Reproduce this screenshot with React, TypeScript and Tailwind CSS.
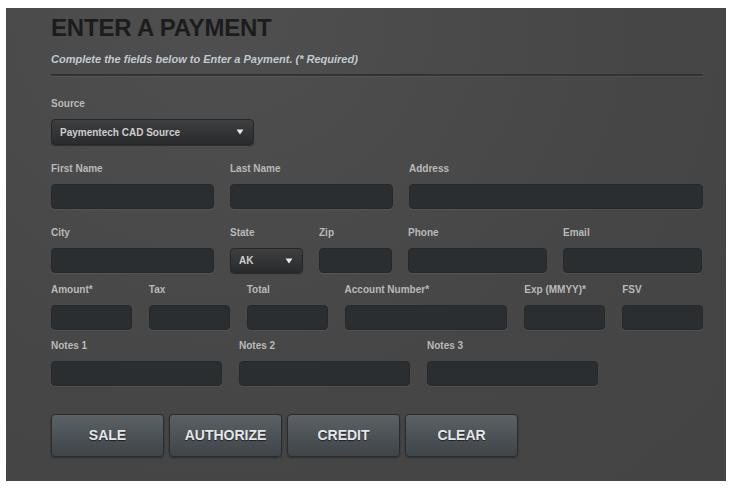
import React from "react";

const Field = ({ label, w, children }: { label: string; w: string; children?: React.ReactNode }) => (
    <div className={`flex flex-col ${w}`}>
        <label className="text-[10px] leading-[14px] font-bold text-[#b9b9b9] mb-[8px]">{label}</label>
        {children ?? (
            <input className="h-[25px] w-full rounded-[4px] bg-[#2b2e31] border border-[#26282a] shadow-[0_1px_0_rgba(255,255,255,0.06)] outline-none" />
        )}
    </div>
);

const Select = ({ value, w }: { value: string; w: string }) => (
    <div
        className={`${w} flex items-center justify-between rounded-[4px] border border-[#262729] bg-gradient-to-b from-[#3e3f41] to-[#2a2b2d] shadow-[0_1px_1px_rgba(0,0,0,0.4)] px-[8px]`}
    >
        <span className="text-[10px] font-bold text-[#cdcdcd]">{value}</span>
        <svg width="8" height="6" viewBox="0 0 8 6" className="mr-[1px]">
            <path d="M0.5 0.5 H7.5 L4 5.5 Z" fill="#e8e8e8" />
        </svg>
    </div>
);

const Btn = ({ text }: { text: string }) => (
    <button className="w-[113px] h-[43px] rounded-[4px] border border-[#2a2d2f] bg-gradient-to-b from-[#5b6266] to-[#3e4448] text-[14px] font-bold text-[#e4e6e8] [text-shadow:0_1px_1px_rgba(0,0,0,0.6)] shadow-[0_1px_2px_rgba(0,0,0,0.35)]">
        {text}
    </button>
);

export default function App() {
    return (
        <div className="w-[737px] h-[493px] bg-white pt-[8px] pl-[6px]" style={{ fontFamily: '"Liberation Sans", Arial, sans-serif' }}>
            <div className="w-[720px] h-[473px] bg-[#474747] bg-[radial-gradient(ellipse_at_30%_0%,#4f4f4f,#464646_60%,#444444)] pl-[45px] pr-[23px]">
                <h1 className="pt-[6px] text-[24px] leading-[28px] font-bold text-[#1c1c1c] tracking-[-0.2px]">ENTER A PAYMENT</h1>
                <p className="mt-[10px] text-[11px] leading-[14px] italic font-bold text-[#c3c9cf]">
                    Complete the fields below to Enter a Payment. (* Required)
                </p>
                <div className="mt-[8px] h-[2px] w-[652px] bg-[#333333] shadow-[0_1px_0_rgba(255,255,255,0.05)]" />

                <div className="mt-[21px]">
                    <Field label="Source" w="w-[203px]">
                        <Select value="Paymentech CAD Source" w="w-[203px] h-[26px]" />
                    </Field>
                </div>

                <div className="mt-[17px] flex gap-[16px]">
                    <Field label="First Name" w="w-[163px]" />
                    <Field label="Last Name" w="w-[163px]" />
                    <Field label="Address" w="w-[294px]" />
                </div>

                <div className="mt-[17px] flex gap-[16px]">
                    <Field label="City" w="w-[163px]" />
                    <Field label="State" w="w-[73px]">
                        <Select value="AK" w="w-[73px] h-[25px]" />
                    </Field>
                    <Field label="Zip" w="w-[73px]" />
                    <Field label="Phone" w="w-[139px]" />
                    <Field label="Email" w="w-[139px]" />
                </div>

                <div className="mt-[10px] flex gap-[17px]">
                    <Field label="Amount*" w="w-[81px]" />
                    <Field label="Tax" w="w-[81px]" />
                    <Field label="Total" w="w-[81px]" />
                    <Field label="Account Number*" w="w-[163px]" />
                    <Field label="Exp (MMYY)*" w="w-[81px]" />
                    <Field label="FSV" w="w-[81px]" />
                </div>

                <div className="mt-[9px] flex gap-[17px]">
                    <Field label="Notes 1" w="w-[171px]" />
                    <Field label="Notes 2" w="w-[171px]" />
                    <Field label="Notes 3" w="w-[171px]" />
                </div>

                <div className="mt-[28px] flex gap-[5px]">
                    <Btn text="SALE" />
                    <Btn text="AUTHORIZE" />
                    <Btn text="CREDIT" />
                    <Btn text="CLEAR" />
                </div>
            </div>
        </div>
    );
}
